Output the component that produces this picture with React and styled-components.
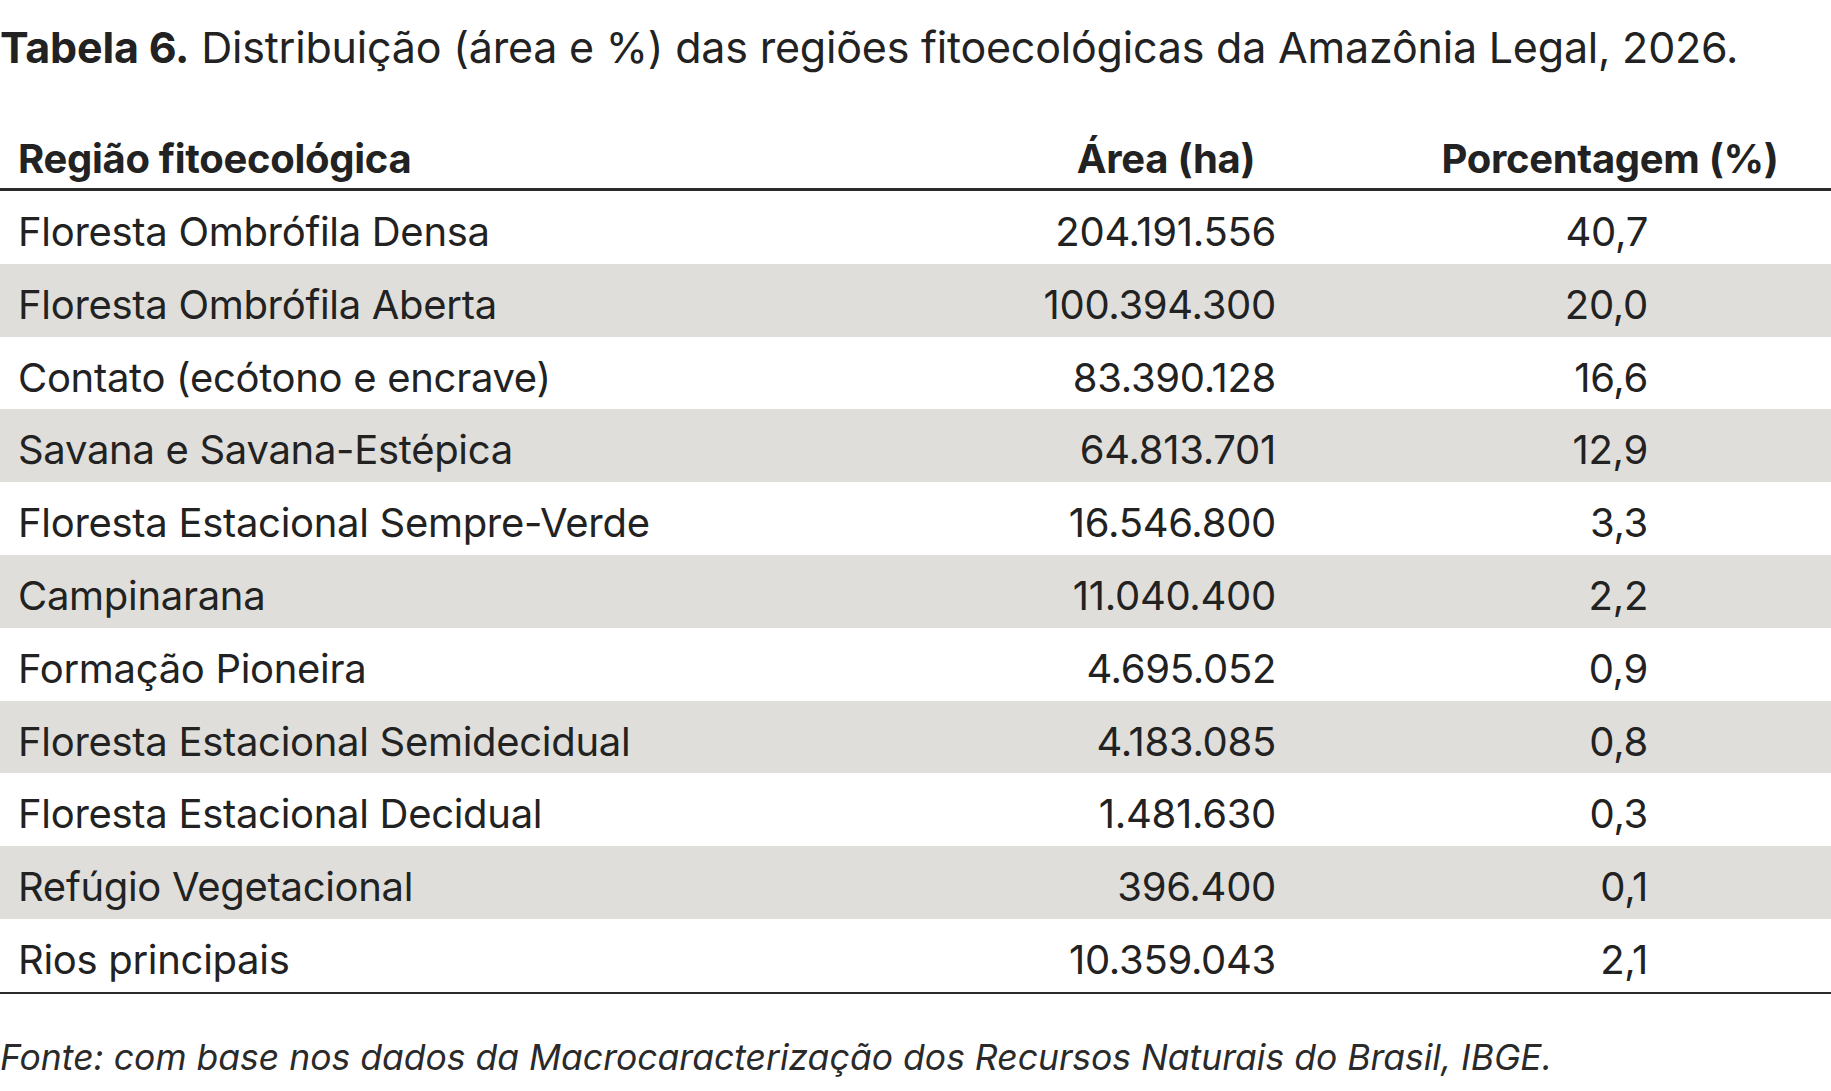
import React from "react";
import styled, { createGlobalStyle } from "styled-components";

const Global = createGlobalStyle`
  html, body { margin: 0; padding: 0; background: #ffffff; }
  body { font-family: Inter, "Noto Sans", sans-serif; color: #222222; }
`;

const Page = styled.div`
  width: 1831px;
  display: flex;
  flex-direction: column;
`;

const Title = styled.p`
  margin: 21px 0 0 0;
  font-size: 43px;
  line-height: 52px;
  font-weight: 400;
  letter-spacing: -0.2px;
  color: #222222;
`;

const Strong = styled.span`
  font-weight: 700;
`;

const Table = styled.div`
  margin-top: 63px;
  display: grid;
  grid-template-columns: 943px 446px 442px;
  border-bottom: 2.5px solid #2b2b2b;
`;

const Row = styled.div`
  display: contents;
`;

const HeadCell = styled.div`
  padding: 0 ${(p) => p.$pr || 0}px 6px ${(p) => p.$pl || 0}px;
  font-size: 40px;
  line-height: 46px;
  font-weight: 700;
  letter-spacing: -0.3px;
  text-align: ${(p) => p.$align || "left"};
  border-bottom: 3px solid #2b2b2b;
  color: #222222;
`;

const Cell = styled.div`
  height: 72.8px;
  box-sizing: border-box;
  padding: 18px ${(p) => p.$pr || 0}px 0 ${(p) => p.$pl || 0}px;
  font-size: 40px;
  line-height: 46px;
  font-weight: 400;
  letter-spacing: -0.3px;
  text-align: ${(p) => p.$align || "left"};
  background: ${(p) => (p.$shaded ? "#dfdeda" : "#ffffff")};
  color: #222222;
  white-space: nowrap;
`;

const Source = styled.p`
  margin: 42px 0 0 0;
  font-size: 35.5px;
  line-height: 44px;
  font-style: italic;
  color: #2a2a2a;
`;

const rows = [
  ["Floresta Ombrófila Densa", "204.191.556", "40,7"],
  ["Floresta Ombrófila Aberta", "100.394.300", "20,0"],
  ["Contato (ecótono e encrave)", "83.390.128", "16,6"],
  ["Savana e Savana-Estépica", "64.813.701", "12,9"],
  ["Floresta Estacional Sempre-Verde", "16.546.800", "3,3"],
  ["Campinarana", "11.040.400", "2,2"],
  ["Formação Pioneira", "4.695.052", "0,9"],
  ["Floresta Estacional Semidecidual", "4.183.085", "0,8"],
  ["Floresta Estacional Decidual", "1.481.630", "0,3"],
  ["Refúgio Vegetacional", "396.400", "0,1"],
  ["Rios principais", "10.359.043", "2,1"],
];

export default function App() {
  return (
    <Page>
      <Global />
      <Title>
        <Strong>Tabela 6.</Strong> Distribuição (área e %) das regiões fitoecológicas da Amazônia Legal, 2026.
      </Title>
      <Table>
        <Row>
          <HeadCell $pl={18}>Região fitoecológica</HeadCell>
          <HeadCell $align="center">Área (ha)</HeadCell>
          <HeadCell $align="center">Porcentagem (%)</HeadCell>
        </Row>
        {rows.map((r, i) => (
          <Row key={r[0]}>
            <Cell $pl={18} $shaded={i % 2 === 1}>{r[0]}</Cell>
            <Cell $align="right" $pr={113} $shaded={i % 2 === 1}>{r[1]}</Cell>
            <Cell $align="right" $pr={183} $shaded={i % 2 === 1}>{r[2]}</Cell>
          </Row>
        ))}
      </Table>
      <Source>
        Fonte: com base nos dados da Macrocaracterização dos Recursos Naturais do Brasil, IBGE.
      </Source>
    </Page>
  );
}
